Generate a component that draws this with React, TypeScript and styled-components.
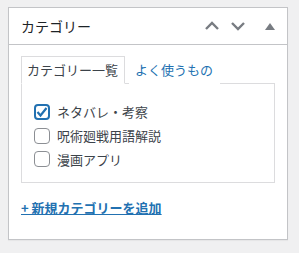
import * as React from 'react';
import styled, { createGlobalStyle } from 'styled-components';

const GlobalStyle = createGlobalStyle`
  html, body {
    margin: 0;
    padding: 0;
    background: #f0f0f1;
  }
  body {
    font-family: "Noto Sans CJK JP", "Noto Sans", sans-serif;
    color: #3c434a;
    font-size: 13px;
  }
`;

const categories = [
  { name: 'ネタバレ・考察', checked: true },
  { name: '呪術廻戦用語解説', checked: false },
  { name: '漫画アプリ', checked: false },
];

const Page = styled.div`
  padding: 7px 0 14px 8px;
`;

const Postbox = styled.div`
  box-sizing: border-box;
  width: 280px;
  height: 233px;
  background: #fff;
  border: 1px solid #c3c4c7;
  box-shadow: 0 1px 1px rgba(0, 0, 0, 0.04);
`;

const Header = styled.div`
  display: flex;
  align-items: center;
  height: 36px;
  border-bottom: 1px solid #c3c4c7;
  padding-left: 12px;
`;

const Title = styled.h2`
  flex: 1;
  margin: 0;
  font-size: 14px;
  font-weight: 400;
  color: #1d2327;
  line-height: 1;
`;

const Actions = styled.div`
  display: flex;
  align-items: center;
  padding-right: 4px;
`;

const IconButton = styled.span<{ $gap?: number }>`
  display: flex;
  align-items: center;
  justify-content: center;
  width: 26px;
  height: 36px;
  margin-left: ${(p) => p.$gap ?? 0}px;
  color: #787c82;
`;

const Inside = styled.div`
  padding: 11px 12px 0 12px;
`;

const Tabs = styled.div`
  display: flex;
  align-items: flex-end;
`;

const Tab = styled.span<{ $active?: boolean }>`
  box-sizing: border-box;
  height: 28px;
  padding: 0 6px 0 5px;
  line-height: 26px;
  font-size: 13px;
  border: 1px solid ${(p) => (p.$active ? '#dcdcde' : 'transparent')};
  border-bottom-color: ${(p) => (p.$active ? '#fff' : 'transparent')};
  background: #fff;
  color: ${(p) => (p.$active ? '#3c434a' : '#2271b1')};
  margin-bottom: -1px;
  position: relative;
  z-index: 1;
  & + & {
    margin-left: 4px;
  }
`;

const Panel = styled.div`
  box-sizing: border-box;
  height: 100px;
  border: 1px solid #dcdcde;
  padding: 16px 12px 11px;
  display: flex;
  flex-direction: column;
`;

const Item = styled.label`
  display: flex;
  align-items: center;
  height: 24px;
  gap: 7px;
  font-size: 13px;
  color: #3c434a;
`;

const Box = styled.span<{ $checked?: boolean }>`
  box-sizing: border-box;
  display: flex;
  align-items: center;
  justify-content: center;
  width: 16px;
  height: 16px;
  border-radius: 4px;
  border: ${(p) => (p.$checked ? '2px solid #2271b1' : '1px solid #8c8f94')};
  background: #fff;
`;

const AddLink = styled.a`
  display: inline-block;
  margin-top: 15px;
  font-size: 13px;
  color: #2271b1;
  text-decoration: underline;
  font-weight: 700;
`;

const Chevron = ({ down }: { down?: boolean }) => (
  <svg width="16" height="10" viewBox="0 0 16 10">
    <path
      d={down ? 'M2 2 L8 8 L14 2' : 'M2 8 L8 2 L14 8'}
      fill="none"
      stroke="currentColor"
      strokeWidth="2.4"
    />
  </svg>
);

export default function App() {
  return (
    <Page>
      <GlobalStyle />
      <Postbox>
        <Header>
          <Title>カテゴリー</Title>
          <Actions>
            <IconButton>
              <Chevron />
            </IconButton>
            <IconButton>
              <Chevron down />
            </IconButton>
            <IconButton $gap={6}>
              <svg width="10" height="7" viewBox="0 0 10 7">
                <path d="M0 7 L5 0 L10 7 Z" fill="currentColor" />
              </svg>
            </IconButton>
          </Actions>
        </Header>
        <Inside>
          <Tabs>
            <Tab $active>カテゴリー一覧</Tab>
            <Tab>よく使うもの</Tab>
          </Tabs>
          <Panel>
            {categories.map((c) => (
              <Item key={c.name}>
                <Box $checked={c.checked}>
                  {c.checked && (
                    <svg width="12" height="12" viewBox="0 0 12 12">
                      <path
                        d="M1.5 6 L4.5 9.5 L10.5 2"
                        fill="none"
                        stroke="#2271b1"
                        strokeWidth="2.2"
                      />
                    </svg>
                  )}
                </Box>
                {c.name}
              </Item>
            ))}
          </Panel>
          <AddLink href="#">+ 新規カテゴリーを追加</AddLink>
        </Inside>
      </Postbox>
    </Page>
  );
}
